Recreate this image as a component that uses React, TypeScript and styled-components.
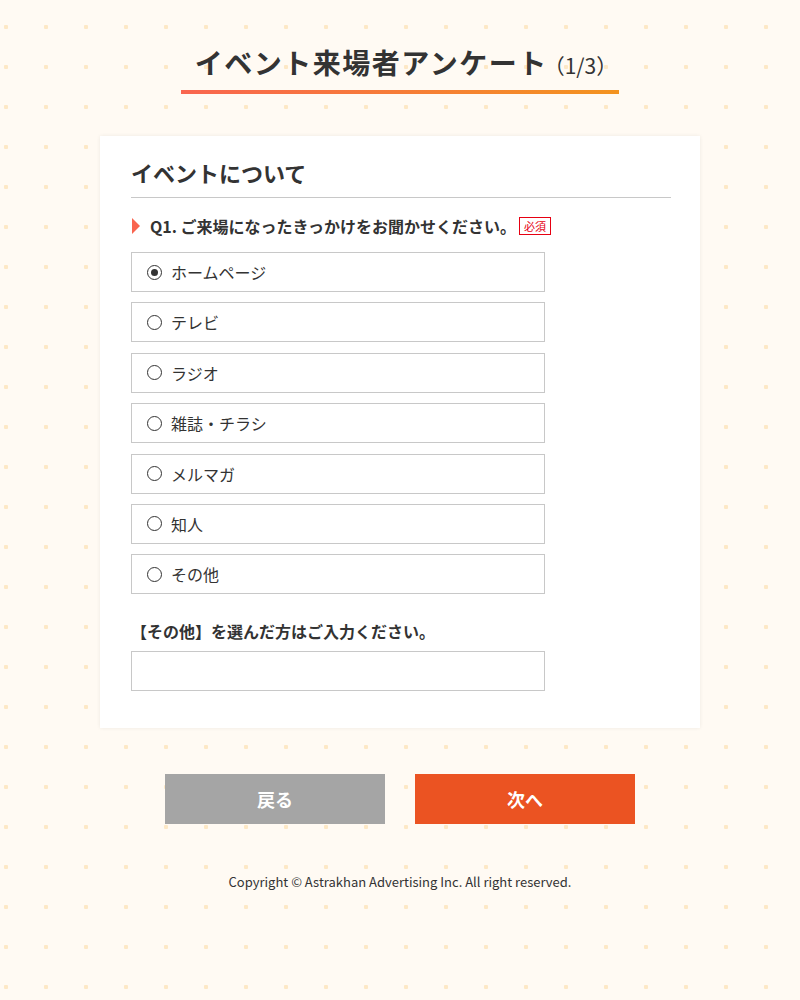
import React, { useState } from 'react';
import styled, { createGlobalStyle } from 'styled-components';

const GlobalStyle = createGlobalStyle`
  html, body {
    margin: 0;
    padding: 0;
  }
  body {
    background-color: #fffaf3;
    background-image: radial-gradient(circle, #fde8c6 2px, transparent 2.5px);
    background-size: 40px 40px;
    background-position: -14px 7px;
    font-family: "Noto Sans CJK JP", "Noto Sans", sans-serif;
    color: #333;
    min-height: 1000px;
  }
`;

const options = ['ホームページ', 'テレビ', 'ラジオ', '雑誌・チラシ', 'メルマガ', '知人', 'その他'];

const App: React.FC = () => {
  const [selected, setSelected] = useState(0);
  const [other, setOther] = useState('');

  return (
    <>
      <GlobalStyle />
      <Page>
        <Header>
          <Title>
            イベント来場者アンケート<Step>（1/3）</Step>
          </Title>
        </Header>

        <Card>
          <SectionTitle>イベントについて</SectionTitle>
          <Question>
            <Arrow />
            <QuestionText>Q1. ご来場になったきっかけをお聞かせください。</QuestionText>
            <Required>必須</Required>
          </Question>

          <OptionList>
            {options.map((label, i) => (
              <OptionRow key={label} onClick={() => setSelected(i)}>
                <Radio $checked={selected === i} />
                <OptionLabel>{label}</OptionLabel>
              </OptionRow>
            ))}
          </OptionList>

          <SubLabel>【その他】を選んだ方はご入力ください。</SubLabel>
          <TextInput value={other} onChange={(e) => setOther(e.target.value)} />
        </Card>

        <Buttons>
          <Button $variant="back">戻る</Button>
          <Button $variant="next">次へ</Button>
        </Buttons>

        <Footer>Copyright © Astrakhan Advertising Inc. All right reserved.</Footer>
      </Page>
    </>
  );
};

export default App;

const Page = styled.div`
  display: flex;
  flex-direction: column;
  align-items: center;
  padding-top: 41px;
`;

const Header = styled.div`
  display: flex;
  justify-content: center;
  width: 438px;
  padding-bottom: 4px;
  border-bottom: 4px solid transparent;
  border-image: linear-gradient(90deg, #f9654f, #f3931f) 1;
`;

const Title = styled.h1`
  margin: 0 0 0 12px;
  font-size: 28px;
  line-height: 42px;
  font-weight: 700;
  letter-spacing: 1.5px;
  color: #333;
  white-space: nowrap;
`;

const Step = styled.span`
  font-size: 21px;
  font-weight: 400;
  letter-spacing: 0;
  margin-left: -4px;
`;

const Card = styled.div`
  box-sizing: border-box;
  width: 600px;
  margin-top: 42px;
  padding: 20px 29px 37px 31px;
  background: #fff;
  box-shadow: 0 0 4px rgba(0, 0, 0, 0.07);
`;

const SectionTitle = styled.h2`
  margin: 0;
  font-size: 22px;
  line-height: 33px;
  font-weight: 700;
  padding-bottom: 8px;
  border-bottom: 1px solid #c8c8c8;
`;

const Question = styled.div`
  display: flex;
  align-items: center;
  margin-top: 16px;
  height: 24px;
`;

const Arrow = styled.span`
  width: 0;
  height: 0;
  margin: 0 10px 0 1px;
  border-top: 8px solid transparent;
  border-bottom: 8px solid transparent;
  border-left: 8px solid #f9654f;
`;

const QuestionText = styled.span`
  font-size: 16px;
  font-weight: 700;
  line-height: 24px;
`;

const Required = styled.span`
  margin-left: 3px;
  padding: 0 4px;
  border: 1px solid #e60012;
  color: #e60012;
  font-size: 11px;
  line-height: 16px;
`;

const OptionList = styled.div`
  display: flex;
  flex-direction: column;
  gap: 10.4px;
  margin-top: 14px;
`;

const OptionRow = styled.label`
  box-sizing: border-box;
  display: flex;
  align-items: center;
  width: 414px;
  height: 40px;
  padding-left: 15px;
  border: 1px solid #c8c8c8;
  background: #fff;
  cursor: pointer;
`;

const Radio = styled.span<{ $checked: boolean }>`
  box-sizing: border-box;
  position: relative;
  width: 15px;
  height: 15px;
  border: 1.5px solid #333;
  border-radius: 50%;

  &::after {
    content: '';
    display: ${(p) => (p.$checked ? 'block' : 'none')};
    position: absolute;
    top: 50%;
    left: 50%;
    width: 7px;
    height: 7px;
    margin: -3.5px 0 0 -3.5px;
    border-radius: 50%;
    background: #333;
  }
`;

const OptionLabel = styled.span`
  margin-left: 9px;
  font-size: 16px;
  line-height: 24px;
  color: #333;
`;

const SubLabel = styled.div`
  margin-top: 25px;
  font-size: 16px;
  font-weight: 700;
  line-height: 24px;
`;

const TextInput = styled.input`
  box-sizing: border-box;
  display: block;
  width: 414px;
  height: 40px;
  margin-top: 8px;
  padding: 0 12px;
  border: 1px solid #c8c8c8;
  font-family: inherit;
  font-size: 16px;
  outline: none;
`;

const Buttons = styled.div`
  display: flex;
  gap: 30px;
  margin-top: 46px;
`;

const Button = styled.button<{ $variant: 'back' | 'next' }>`
  width: 220px;
  height: 50px;
  border: none;
  background: ${(p) => (p.$variant === 'next' ? '#eb5322' : '#a5a5a5')};
  color: #fff;
  font-family: inherit;
  font-size: 18px;
  font-weight: 700;
  cursor: pointer;
`;

const Footer = styled.footer`
  margin-top: 48px;
  font-size: 13px;
  line-height: 20px;
  color: #333;
`;
